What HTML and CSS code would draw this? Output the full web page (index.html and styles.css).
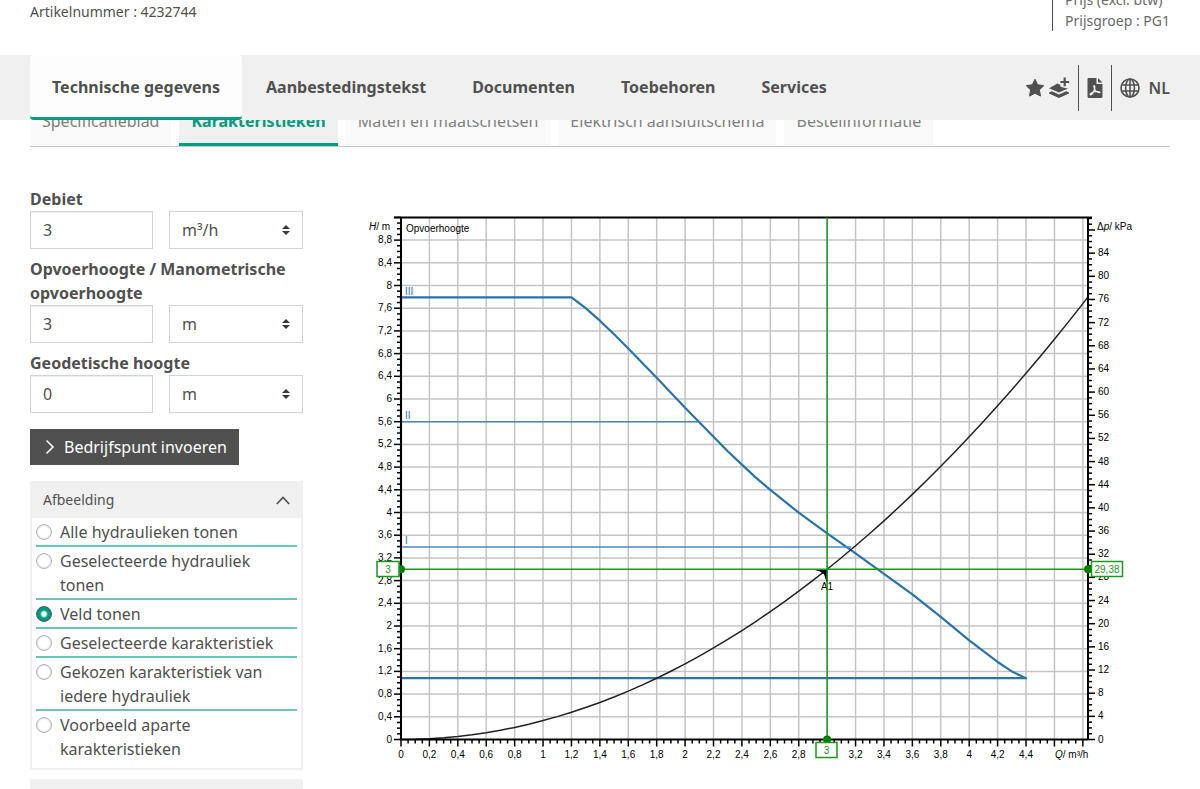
FILE: index.html
```html
<!DOCTYPE html>
<html lang="nl">
<head>
    <meta charset="UTF-8">
    <meta name="viewport" content="width=device-width, initial-scale=1.0">
    <title>Karakteristieken</title>
    <link rel="stylesheet" href="styles.css">
</head>
<body>
    <header class="product-info container">
        <p class="article">Artikelnummer : 4232744</p>
        <div class="price">
            <p>Prijs (excl. btw)</p>
            <p>Prijsgroep : PG1</p>
        </div>
    </header>

    <div class="main-bar">
        <div class="container main-bar-inner">
            <nav class="main-nav">
                <a href="#technisch" class="active">Technische gegevens</a>
                <a href="#tekst">Aanbestedingstekst</a>
                <a href="#documenten">Documenten</a>
                <a href="#toebehoren">Toebehoren</a>
                <a href="#services">Services</a>
            </nav>
            <div class="tools">
                <div class="tool-group">
                    <button type="button" class="icon-btn" aria-label="Favoriet">
                        <svg width="20" height="20" viewBox="0 0 20 20"><path d="M10 1.2 L12.7 6.8 L18.8 7.6 L14.4 11.9 L15.5 18.1 L10 15.2 L4.5 18.1 L5.6 11.9 L1.2 7.6 L7.3 6.8 Z" fill="#505050" stroke="#505050" stroke-linejoin="round"/></svg>
                    </button>
                    <button type="button" class="icon-btn" aria-label="Toevoegen aan project">
                        <svg width="22" height="22" viewBox="0 0 22 22" fill="#505050"><path d="M1 11.2 L9.5 6.6 L12.3 7.8 L12.3 9.4 L15 10.6 L20 11.4 L11 15.4 Z"/><path d="M1 15.6 L3.8 14.3 L11 17.4 L18.2 14.3 L21 15.6 L21 16.6 L11 21 L1 16.6 Z"/><path d="M15.6 0.6 H17.8 V3.9 H21.2 V6.1 H17.8 V9.2 H15.6 V6.1 H12.4 V3.9 H15.6 Z"/></svg>
                    </button>
                </div>
                <div class="tool-group bordered">
                    <button type="button" class="icon-btn" aria-label="PDF">
                        <svg width="16" height="22" viewBox="0 0 16 22"><path d="M1.5 1 H9.5 V7 H15.5 V19.5 Q15.5 21 14 21 H2 Q0.5 21 0.5 19.5 V2 Q0.5 1 1.5 1 Z M11 1 L15.5 5.6 H11 Z" fill="#505050"/><path d="M7.2 8.6 C8.3 8.8 7.8 11.5 7.2 13 C6.4 15.2 4.6 18 3.3 17.8 C2.3 17.3 4.4 15.6 7 14.9 C9.4 14.3 13 14.3 13 15.3 C12.5 16.6 9.4 14.8 8.2 13 C7.1 11.2 6.4 8.7 7.2 8.6 Z" fill="none" stroke="#f0f0f0" stroke-width="1.2"/></svg>
                    </button>
                </div>
                <button type="button" class="lang-btn">
                    <svg width="20" height="20" viewBox="0 0 20 20" fill="none" stroke="#505050" stroke-width="1.6"><circle cx="10" cy="10" r="9"/><ellipse cx="10" cy="10" rx="4.4" ry="9"/><path d="M10 1 V19 M1.6 7 H18.4 M1.6 13 H18.4"/></svg>
                    NL
                </button>
            </div>
        </div>
    </div>

    <div class="container">
        <nav class="sub-nav">
            <a href="#specificatieblad">Specificatieblad</a>
            <a href="#karakteristieken" class="active">Karakteristieken</a>
            <a href="#maten">Maten en maatschetsen</a>
            <a href="#schema">Elektrisch aansluitschema</a>
            <a href="#bestel">Bestelinformatie</a>
        </nav>
    </div>

    <main class="container content">
        <aside class="sidebar">
            <form>
                <div class="field">
                    <label for="debiet">Debiet</label>
                    <div class="field-row">
                        <input type="text" id="debiet" value="3">
                        <select aria-label="Eenheid debiet"><option>m³/h</option></select>
                    </div>
                </div>
                <div class="field">
                    <label for="opvoerhoogte">Opvoerhoogte / Manometrische opvoerhoogte</label>
                    <div class="field-row">
                        <input type="text" id="opvoerhoogte" value="3">
                        <select aria-label="Eenheid opvoerhoogte"><option>m</option></select>
                    </div>
                </div>
                <div class="field">
                    <label for="geodetisch">Geodetische hoogte</label>
                    <div class="field-row">
                        <input type="text" id="geodetisch" value="0">
                        <select aria-label="Eenheid geodetische hoogte"><option>m</option></select>
                    </div>
                </div>
                <button type="button" class="submit-btn">
                    <svg width="10" height="16" viewBox="0 0 10 16" fill="none" stroke="#fff" stroke-width="1.6"><path d="M1.5 1.5 L8 8 L1.5 14.5"/></svg>
                    Bedrijfspunt invoeren
                </button>
            </form>

            <section class="panel">
                <button type="button" class="panel-head">
                    Afbeelding
                    <svg width="14" height="10" viewBox="0 0 14 10" fill="none" stroke="#505050" stroke-width="1.6"><path d="M0.8 9 L7 2.4 L13.2 9"/></svg>
                </button>
                <div class="panel-body">
                    <label class="option"><input type="radio" name="weergave"><span>Alle hydraulieken tonen</span></label>
                    <label class="option"><input type="radio" name="weergave"><span>Geselecteerde hydrauliek tonen</span></label>
                    <label class="option"><input type="radio" name="weergave" checked><span>Veld tonen</span></label>
                    <label class="option"><input type="radio" name="weergave"><span>Geselecteerde karakteristiek</span></label>
                    <label class="option"><input type="radio" name="weergave"><span>Gekozen karakteristiek van iedere hydrauliek</span></label>
                    <label class="option"><input type="radio" name="weergave"><span>Voorbeeld aparte karakteristieken</span></label>
                </div>
            </section>
            <section class="panel">
                <button type="button" class="panel-head" aria-label="Meer opties"></button>
            </section>
        </aside>

        <div class="chart-area">
            <svg id="chart" class="chart" viewBox="0 0 837 580" role="img" aria-label="Opvoerhoogte"></svg>
        </div>
    </main>
    <script src="chart.js"></script>
</body>
</html>
```
FILE: styles.css
```css
* {
    box-sizing: border-box;
}
body {
    margin: 0;
    font-family: "Noto Sans", sans-serif;
    font-size: 16px;
    line-height: 24px;
    color: #505050;
    background-color: #fff;
    overflow: hidden;
}
p {
    margin: 0;
}
button, input, select {
    font: inherit;
    color: inherit;
}
button {
    border: none;
    background: none;
    padding: 0;
    cursor: pointer;
}
svg {
    display: block;
}
.container {
    padding: 0 30px;
}

/* product */
.product-info {
    display: flex;
    justify-content: space-between;
    height: 55px;
    font-size: 14px;
    line-height: 21px;
}
.article {
    padding-top: 1px;
}
.price {
    align-self: flex-end;
    margin-bottom: 24px;
    padding-left: 12px;
    border-left: 1px solid #505050;
    color: #6a6a6a;
}

/* sticky bar */
.main-bar {
    position: sticky;
    top: 0;
    z-index: 2;
    background-color: #f0f0f0;
}
.main-bar-inner {
    display: flex;
    justify-content: space-between;
    align-items: center;
}
.main-nav {
    display: flex;
    gap: 2px;
}
.main-nav a {
    padding: 20px 22px 18px;
    border-bottom: 3px solid transparent;
    border-radius: 4px;
    color: #505050;
    font-weight: bold;
    text-decoration: none;
}
.main-nav .active {
    background-color: #fdfdfd;
    border-bottom-color: #009c82;
}
.tools {
    display: flex;
    align-items: center;
    gap: 8px;
}
.tool-group {
    display: flex;
    align-items: center;
    gap: 3px;
    height: 46px;
}
.bordered {
    padding: 0 8px;
    border-left: 1px solid #505050;
    border-right: 1px solid #505050;
}
.lang-btn {
    display: flex;
    align-items: center;
    gap: 9px;
    font-weight: 600;
}

/* sub tabs */
.sub-nav {
    display: flex;
    gap: 8px;
    height: 27px;
    border-bottom: 1px solid #c8c8c8;
}
.sub-nav a {
    display: flex;
    align-items: flex-end;
    align-self: flex-end;
    height: 44px;
    padding: 0 12px 13px;
    background-color: #f9f9f9;
    color: #808080;
    text-decoration: none;
}
.sub-nav .active {
    padding-bottom: 10px;
    background-color: #f0f0f0;
    border-bottom: 3px solid #009c82;
    color: #009c82;
    font-weight: bold;
}

/* content */
.content {
    display: grid;
    grid-template-columns: 273px 1fr;
    gap: 30px;
    padding-top: 40px;
}
.field {
    margin-bottom: 8px;
}
.field label {
    display: block;
    font-weight: bold;
}
.field-row {
    display: grid;
    grid-template-columns: 123px 1fr;
    gap: 16px;
}
.field-row input, .field-row select {
    width: 100%;
    height: 38px;
    padding: 6px 12px;
    border: 1px solid #ced4da;
    border-radius: 0;
    background-color: #fff;
}
.field-row input {
    box-shadow: inset 0 1px 1px rgba(0,0,0,0.075);
}
.field-row select {
    appearance: none;
    background: #fff url("data:image/svg+xml,%3csvg xmlns='http://www.w3.org/2000/svg' width='4' height='5' viewBox='0 0 4 5'%3e%3cpath fill='%23343a40' d='M2 0L0 2h4zm0 5L0 3h4z'/%3e%3c/svg%3e") no-repeat right 12px center / 8px 10px;
}
.submit-btn {
    display: flex;
    align-items: center;
    gap: 9px;
    margin: 16px 0;
    padding: 6px 12px 6px 15px;
    background-color: #505050;
    color: #fff;
}
.panel {
    margin-bottom: 9px;
}
.panel-head {
    display: flex;
    justify-content: space-between;
    align-items: center;
    width: 100%;
    height: 37px;
    padding: 0 13px;
    background-color: #f0f0f0;
    font-size: 14px;
}
.panel-body {
    padding: 0 4px 4px;
    border: 2px solid #f0f0f0;
    border-top: none;
}
.option {
    display: flex;
    align-items: flex-start;
    gap: 8px;
    padding: 2px 0 1px;
    border-bottom: 2px solid #6cc6b7;
}
.option:last-child {
    padding-bottom: 3px;
    border-bottom: none;
}
.option input {
    appearance: none;
    flex: none;
    width: 16px;
    height: 16px;
    margin: 4px 0 0;
    border: 1px solid #adb5bd;
    border-radius: 50%;
    background-color: #fff;
    box-shadow: inset 0 0 1px 1px rgba(0,0,0,0.1);
}
.option input:checked {
    border-color: #50645f;
    background: radial-gradient(circle, #fff 2px, #009c82 4px);
}

/* chart */
.chart-area {
    padding-top: 13px;
}
.chart {
    width: 100%;
    height: auto;
    font-family: "Liberation Sans", Arial, sans-serif;
    font-size: 10px;
    fill: #000;
}
.grid {
    stroke: #c4c4c4;
    stroke-width: 1.5;
}
.axis {
    stroke: #000;
    stroke-width: 2;
}
.tick {
    stroke: #000;
    stroke-width: 1.5;
}
.curve {
    fill: none;
    stroke: #2a74ae;
    stroke-width: 2.2;
    stroke-linejoin: round;
}
.limit {
    stroke: #4a8bbd;
    stroke-width: 1.5;
}
.system {
    fill: none;
    stroke: #222;
    stroke-width: 1.5;
}
.duty {
    stroke: #1f961f;
    stroke-width: 1.5;
}
.dot {
    fill: #008000;
}
.box {
    fill: #fff;
    stroke: #1f961f;
    stroke-width: 1.5;
}
.box-text {
    fill: #1f961f;
}
.stage {
    fill: #2a74ae;
}
```
FILE: chart.js
```js
const svg = document.getElementById('chart');
const left = 68, right = 755, top_ = 17.5, bottom = 539.5;

// pump field: flow (m3/h), head (m)
const field = [
    [1.2, 7.79], [1.3, 7.6], [1.4, 7.38], [1.5, 7.14], [1.6, 6.89], [1.8, 6.375], [2, 5.847],
    [2.2, 5.335], [2.3, 5.08], [2.4, 4.844], [2.5, 4.61], [2.6, 4.4], [2.8, 3.997], [3, 3.633],
    [3.2, 3.28], [3.4, 2.92], [3.6, 2.559], [3.8, 2.159], [4, 1.748], [4.2, 1.366],
    [4.3, 1.2], [4.4, 1.08]
];

const X = q => left + q * 142.05;
const Y = h => bottom - h * 56.75;
const P = p => bottom - p * 5.79;
const label = v => String(Math.round(v * 10) / 10).replace('.', ',');

function add(name, attrs, text) {
    const el = document.createElementNS('http://www.w3.org/2000/svg', name);
    for (const key in attrs) el.setAttribute(key, attrs[key]);
    if (text) el.textContent = text;
    svg.appendChild(el);
    return el;
}

function line(cls, x1, y1, x2, y2) {
    add('line', { class: cls, x1, y1, x2, y2 });
}

function text(x, y, value, anchor, cls) {
    return add('text', { x, y, 'text-anchor': anchor || 'start', class: cls || '' }, value);
}

// grid
for (let i = 1; i <= 24; i++) line('grid', X(i * 0.2), top_, X(i * 0.2), bottom);
for (let i = 1; i <= 22; i++) line('grid', left, Y(i * 0.4), right, Y(i * 0.4));

// flow axis
for (let i = 0; i <= 96; i++) {
    const major = i % 4 === 0;
    line('tick', X(i * 0.05), bottom, X(i * 0.05), bottom + (major ? 7 : 4));
    if (major && i <= 88 && i !== 60) text(X(i * 0.05), 558, label(i * 0.05), 'middle');
}
// head axis
for (let i = 0; i <= 92; i++) {
    const major = i % 4 === 0;
    line('tick', left - (major ? 7 : 4), Y(i / 10), left, Y(i / 10));
    if (major && i < 92) text(59, Y(i / 10) + 3, label(i / 10), 'end');
}
// pressure axis
for (let i = 0; i <= 90; i++) {
    const major = i % 4 === 0;
    line('tick', right, P(i), right + (major ? 7 : 4), P(i));
    if (major && i < 88) text(765, P(i) + 3, String(i));
}

// curves
const points = list => list.map(p => X(p[0]) + ',' + Y(p[1])).join(' ');
add('polygon', { class: 'curve', points: points([[0, 1.08], [0, 7.79], ...field]) });
line('limit', left, Y(5.6), X(2.09), Y(5.6));
line('limit', left, Y(3.39), X(3.17), Y(3.39));
const system = [];
for (let q = 0; q < 4.8; q += 0.1) system.push([q, q * q / 3]);
system.push([4.836, 7.8]);
add('polyline', { class: 'system', points: points(system) });

line('axis', left - 7, top_, right + 4, top_);
line('axis', left, top_, left, bottom);
line('axis', right, top_, right, bottom);
line('axis', left, bottom, right, bottom);

// operating point
add('path', { d: 'M482 369.5 L494 369.5 L494 382 L491.5 374 L487 371 Z', stroke: '#000' });
text(494, 390, 'A1', 'middle');
line('duty', X(3), top_, X(3), bottom);
line('duty', left, Y(3), right, Y(3));
add('circle', { class: 'dot', cx: left, cy: Y(3), r: 4 });
add('circle', { class: 'dot', cx: right, cy: Y(3), r: 4 });
add('circle', { class: 'dot', cx: X(3), cy: bottom, r: 4 });
add('rect', { class: 'box', x: 44, y: 361.5, width: 22, height: 15 });
text(55, 373, '3', 'middle', 'box-text');
add('rect', { class: 'box', x: 758.5, y: 361.5, width: 31, height: 15 });
text(774, 373, '29,38', 'middle', 'box-text');
add('rect', { class: 'box', x: 483, y: 542.5, width: 21, height: 15 });
text(493.5, 554, '3', 'middle', 'box-text');

// titles
const quantity = (x, y, symbol, unit, prefix) => {
    const el = text(x, y, prefix || '');
    const italic = document.createElementNS('http://www.w3.org/2000/svg', 'tspan');
    italic.setAttribute('font-style', 'italic');
    italic.textContent = symbol;
    el.append(italic, '/ ' + unit);
};
quantity(36, 30, 'H', 'm');
quantity(764, 30, 'p', 'kPa', 'Δ');
quantity(722, 558, 'Q', 'm³/h');
text(73, 32, 'Opvoerhoogte');
text(72, 95, 'III', 'start', 'stage');
text(72, 219, 'II', 'start', 'stage');
text(72, 344, 'I', 'start', 'stage');
```
